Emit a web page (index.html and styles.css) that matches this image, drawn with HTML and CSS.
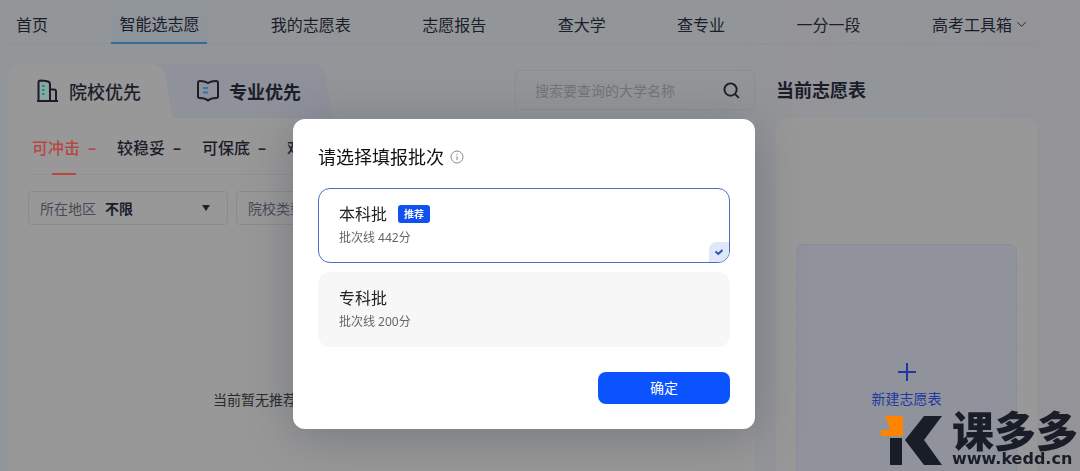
FILE: index.html
```html
<!DOCTYPE html>
<html lang="zh-CN">
<head>
<meta charset="utf-8">
<meta name="viewport" content="width=device-width, initial-scale=1">
<title>智能选志愿</title>
<link rel="stylesheet" href="styles.css">
</head>
<body>
<div class="page">
  <nav class="nav">
    <a href="#">首页</a>
    <a href="#" class="active">智能选志愿</a>
    <a href="#">我的志愿表</a>
    <a href="#">志愿报告</a>
    <a href="#">查大学</a>
    <a href="#">查专业</a>
    <a href="#">一分一段</a>
    <a href="#">高考工具箱<svg class="chevron" viewBox="0 0 12 12"><path d="M1.500 3.500 6 8l4.500-4.500"/></svg></a>
  </nav>

  <div class="columns">
    <main class="main">
      <div class="topbar">
        <div class="tabs">
          <button type="button" class="tab current">
            <svg viewBox="0 0 24 24"><path class="mint" d="M4 4h8v16H4z"/><path d="M2.500 22V3.500Q2.500 1.500 4.500 1.500L10 2Q14 2.600 14 5V22M14 10.500h4Q20 10.500 20 12.500V22M1 22h21"/><path class="green" d="M6 7h2.500M6 11h2.500M6 15h2.500"/></svg>院校优先
          </button>
          <button type="button" class="tab other">
            <svg viewBox="0 0 24 24"><path d="M2 4Q2 2 4 2Q9 2 12 4Q15 2 20 2Q22 2 22 4V17.500Q22 19 20 19Q15 19 12 21.500Q9 19 4 19Q2 19 2 17.500Z"/><path class="blue" d="M7 9h5M7 13.500h5"/></svg>专业优先
          </button>
        </div>
        <form class="search">
          <input type="text" aria-label="搜索大学" placeholder="搜索要查询的大学名称">
          <button type="button" aria-label="搜索"><svg viewBox="0 0 18 18"><circle cx="8" cy="8" r="6.500"/><path d="m12.800 12.800 4 4"/></svg></button>
        </form>
      </div>
      <section class="panel">
        <div class="levels">
          <button type="button" class="level on">可冲击<span>–</span></button>
          <button type="button" class="level">较稳妥<span>–</span></button>
          <button type="button" class="level">可保底<span>–</span></button>
          <button type="button" class="level">难</button>
        </div>
        <div class="filters">
          <label class="filter">所在地区<select><option>不限</option></select><svg viewBox="0 0 10 8"><path d="M1 1h8L5 7z"/></svg></label>
          <label class="filter">院校类型<select><option>不限</option></select><svg viewBox="0 0 10 8"><path d="M1 1h8L5 7z"/></svg></label>
        </div>
        <p class="empty">当前暂无推荐</p>
      </section>
    </main>

    <aside class="side">
      <h2>当前志愿表</h2>
      <div class="card">
        <button type="button" class="create">
          <svg viewBox="0 0 20 20"><path d="M10 1v18M1 10h18"/></svg>
          新建志愿表
        </button>
      </div>
    </aside>
  </div>
</div>

<div class="mask">
  <form class="modal" role="dialog" aria-labelledby="modal-title">
    <h1 id="modal-title">请选择填报批次<svg viewBox="0 0 14 14"><circle cx="7" cy="7" r="6"/><path d="M7 6.200v4M7 3.800v1.200"/></svg></h1>
    <label class="option">
      <input type="radio" name="batch" checked>
      <span class="name">本科批<b class="badge">推荐</b></span>
      <span class="line">批次线 442分</span>
      <span class="tick"><svg viewBox="0 0 10 8"><path d="m1.500 3.500 2.800 2.500 4.200-4"/></svg></span>
    </label>
    <label class="option">
      <input type="radio" name="batch">
      <span class="name">专科批</span>
      <span class="line">批次线 200分</span>
      <span class="tick"><svg viewBox="0 0 10 8"><path d="m1.500 3.500 2.800 2.500 4.200-4"/></svg></span>
    </label>
    <button type="button" class="confirm">确定</button>
  </form>
</div>

<div class="brand">
  <svg viewBox="0 0 62 52"><path class="orange" d="M5 1h18v20H1v-6h7l2-2z"/><path d="M10 23h12v27H10z"/><path d="M44 1h18L44 25l18 25H44L25 25z"/></svg>
  <div class="brand-text"><strong>课多多</strong><span>www.kedd.cn</span></div>
</div>
</body>
</html>
```

FILE: styles.css
```css
* { box-sizing: border-box; }
body {
  margin: 0;
  font-family: "Noto Sans", "Noto Sans CJK SC", sans-serif;
  color: #1b1d2b;
  background: #939698;
}
button, input, select { font: inherit; color: inherit; border: 0; padding: 0; margin: 0; background: none; }
h1, h2, p { margin: 0; font-weight: 400; }
svg { fill: none; stroke: currentColor; flex: none; }
a { color: inherit; text-decoration: none; }

.page {
  display: flex;
  flex-direction: column;
  height: 100vh;
  overflow: hidden;
  padding: 0 43px 0 8px;
  background: linear-gradient(90deg, #929698 68%, #959498 75%, #929698 82%, #949498 96%);
}
.nav {
  display: flex;
  flex: none;
  justify-content: space-between;
  height: 44px;
  padding-right: 2px;
  border-bottom: 1px solid #8c8f93;
}
.nav a {
  display: flex;
  align-items: center;
  gap: 4px;
  height: 44px;
  padding: 4px 8px 0;
  font-size: 16px;
  white-space: nowrap;
}
.nav .active { border-bottom: 2px solid #326b96; background: linear-gradient(#929698, #8d939d); }
.chevron { width: 11px; height: 11px; }

.columns { display: flex; flex: 1; gap: 21px; }
.main { flex: 1; min-width: 0; display: flex; flex-direction: column; }
.topbar { display: flex; justify-content: space-between; padding-top: 20px; }
.tabs { position: relative; z-index: 0; display: flex; height: 54px; }
.tab {
  position: relative;
  isolation: isolate;
  display: flex;
  align-items: center;
  gap: 9px;
  width: 160px;
  padding-left: 28px;
  font-size: 18px;
  font-weight: 500;
  white-space: nowrap;
}
/* slanted right edge of each tab */
.tab::after {
  content: "";
  position: absolute;
  z-index: -1;
  inset: 0 0 0 20px;
  border-radius: 0 12px 0 0;
  transform: skewX(10deg);
}
.tab svg { width: 24px; height: 24px; stroke-width: 2; }
.tab .mint { fill: #86aaa1; stroke: none; }
.tab .green { stroke: #238b72; }
.tab .blue { stroke: #3475a5; }
.current { z-index: 2; border-radius: 12px 0 0 0; background: linear-gradient(#989898, #989898) left / 140px 100% no-repeat; }
.current::after { background: #989898; }
.other { z-index: 1; font-weight: 700; }
.other::after { inset: 0 0 0 -20px; background: #8f919b; }
.search {
  display: flex;
  align-items: center;
  width: 240px;
  height: 40px;
  margin-top: 6px;
  padding: 0 14px 0 19px;
  border: 1px solid #8b8e91;
  border-radius: 4px;
}
.search input { flex: 1; min-width: 0; font-size: 14px; outline: 0; }
.search input::placeholder { color: #717477; opacity: 1; }
.search button { display: flex; }
.search svg { width: 17px; height: 17px; stroke-width: 2; }

.panel { position: relative; z-index: 1; flex: 1; padding: 13px 20px 0; background: #989898; }
.levels { display: flex; gap: 20px; margin-left: 4px; height: 44px; border-bottom: 1px solid #909092; }
.level {
  position: relative;
  display: flex;
  gap: 8px;
  align-items: flex-start;
  padding-top: 5px;
  min-width: 65px;
  font-size: 16px;
  line-height: 24px;
  font-weight: 500;
  white-space: nowrap;
}
.level span { width: 8px; font-weight: 600; }
.on { color: #b64743; }
.on::after {
  content: "";
  position: absolute;
  left: 20px;
  bottom: -1px;
  width: 24px;
  height: 2px;
  background: #b64743;
}
.filters { display: flex; gap: 8px; margin: 16px 0 0; }
.filter {
  display: flex;
  align-items: center;
  gap: 9px;
  width: 200px;
  height: 34px;
  padding: 0 16px 0 11px;
  border: 1px solid #8b8b8d;
  border-radius: 4px;
  font-size: 14px;
  color: #484954;
  white-space: nowrap;
}
.filter select { flex: 1; appearance: none; color: #1b1d2b; font-weight: 700; }
.filter svg { width: 10px; height: 8px; fill: #222; stroke: none; }
.empty { padding: 165px 0 0 185px; font-size: 14px; line-height: 20px; color: #292929; }

.side { display: flex; flex-direction: column; width: 261px; }
.side h2 { padding: 33px 0 14px; font-size: 18px; line-height: 27px; font-weight: 700; }
.card { flex: 1; display: flex; padding: 126px 20px 0; border-radius: 12px 12px 0 0; background: #989898; }
.create {
  flex: 1;
  display: flex;
  flex-direction: column;
  align-items: center;
  gap: 7px;
  padding-top: 117px;
  border: 1px dashed #858aa0;
  border-bottom: 0;
  border-radius: 8px 8px 0 0;
  background: #90939c;
  color: #1f399f;
  font-size: 14px;
  line-height: 20px;
}
.create svg { width: 20px; height: 20px; stroke-width: 2; }

.mask { position: fixed; z-index: 5; inset: 0; display: flex; justify-content: center; align-items: flex-start; padding: 119px 32px 0 0; }
.modal {
  display: flex;
  flex-direction: column;
  gap: 9px;
  width: 462px;
  padding: 24px 25px 25px;
  border-radius: 12px;
  background: #fff;
  box-shadow: 0 8px 48px rgba(70, 74, 90, 0.4);
  color: #222;
}
.modal h1 { display: flex; align-items: center; gap: 6px; margin-bottom: 8px; font-size: 18px; line-height: 28px; color: #111; }
.modal h1 svg { width: 14px; height: 14px; stroke: #888; }
.option {
  position: relative;
  display: flex;
  flex-direction: column;
  height: 75px;
  padding: 13px 20px;
  border: 1px solid #f7f7f7;
  border-radius: 12px;
  background: #f7f7f7;
  overflow: hidden;
}
.option input { position: absolute; opacity: 0; }
.name { display: flex; align-items: center; gap: 11px; font-size: 16px; line-height: 24px; }
.badge { padding: 0 6px; border-radius: 3px; background: #1151ee; color: #fff; font-size: 10px; line-height: 18px; }
.line { font-size: 12px; line-height: 24px; color: #666; }
.tick {
  display: none;
  position: absolute;
  right: 0;
  bottom: 0;
  width: 20px;
  height: 20px;
  border-radius: 8px 0 0 0;
  background: #dfe7fb;
  color: #2853b8;
  align-items: center;
  justify-content: center;
}
.tick svg { width: 10px; height: 8px; stroke-width: 2; }
.option:has(:checked) { border-color: #4b6fc0; background: #fff; }
.option:has(:checked) .tick { display: flex; }
.confirm {
  align-self: flex-end;
  width: 132px;
  height: 32px;
  margin-top: 16px;
  padding-bottom: 2px;
  border-radius: 8px;
  background: #0b53ff;
  color: #fff;
  font-size: 14px;
}

.brand { position: fixed; z-index: 6; right: 2px; bottom: 4px; display: flex; align-items: flex-end; gap: 10px; color: #181d27; }
.brand > svg { width: 62px; height: 52px; fill: #181d27; stroke: none; }
.brand .orange { fill: #ff8500; }
.brand-text { display: flex; flex-direction: column; gap: 2px; }
.brand strong { font-family: "Noto Sans CJK SC", sans-serif; font-size: 42px; line-height: 40px; font-weight: 900; }
.brand span { font-family: "DejaVu Sans", sans-serif; font-size: 16px; line-height: 16px; font-weight: 700; }
```
